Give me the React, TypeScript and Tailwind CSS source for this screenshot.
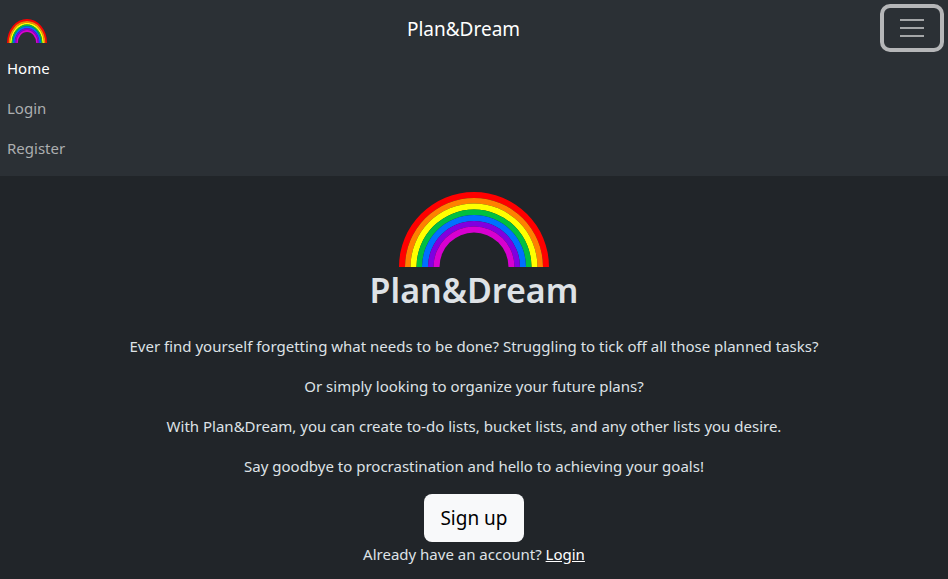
import React from "react";

const BANDS = [
  { r: 75, color: "#ff0000" },
  { r: 69, color: "#ff8000" },
  { r: 63.5, color: "#ffff00" },
  { r: 57.5, color: "#00c040" },
  { r: 52, color: "#0070ff" },
  { r: 46, color: "#8000e0" },
  { r: 40.5, color: "#d800d0" },
];

function Rainbow({ className }: { className: string }) {
  return (
    <svg viewBox="0 0 150 75" preserveAspectRatio="none" className={className} role="img" aria-label="Rainbow">
      {BANDS.map(({ r, color }, i) => {
        const inner = i < BANDS.length - 1 ? BANDS[i + 1].r : 34.5;
        return (
          <path
            key={color}
            fill={color}
            d={`M${75 - r} 75A${r} ${r} 0 0 1 ${75 + r} 75H${75 + inner}A${inner} ${inner} 0 0 0 ${75 - inner} 75Z`}
          />
        );
      })}
    </svg>
  );
}

const LINKS = ["Home", "Login", "Register"];

const LINES = [
  "Ever find yourself forgetting what needs to be done? Struggling to tick off all those planned tasks?",
  "Or simply looking to organize your future plans?",
  "With Plan&Dream, you can create to-do lists, bucket lists, and any other lists you desire.",
  "Say goodbye to procrastination and hello to achieving your goals!",
];

export default function App() {
  return (
    <div className="min-h-screen bg-[#212529] font-['Noto_Sans',sans-serif] text-[15px] leading-6 text-[#dee2e6]">
      <nav className="bg-[#2b3035] p-1">
        <div className="flex items-center justify-between">
          <a href="#home" className="pt-1.5 pl-[3px]">
            <Rainbow className="h-6 w-10" />
          </a>
          <a href="#home" className="pt-0.5 text-[19px] leading-[30px] text-white">
            Plan&amp;Dream
          </a>
          <button
            type="button"
            aria-label="Toggle navigation"
            className="flex h-12 w-16 flex-col items-center justify-center gap-1.5 rounded-[10px] border-4 border-[#b5b6b8]"
          >
            <span className="h-0.5 w-6 bg-[#a4a6a8]" />
            <span className="h-0.5 w-6 bg-[#a4a6a8]" />
            <span className="h-0.5 w-6 bg-[#a4a6a8]" />
          </button>
        </div>
        <ul className="pl-[3px]">
          {LINKS.map((link) => (
            <li key={link} className={link === "Home" ? "text-white" : "text-[#acaeb0]"}>
              <a href={`#${link.toLowerCase()}`} className="block pt-1 pb-3">
                {link}
              </a>
            </li>
          ))}
        </ul>
      </nav>
      <main className="flex flex-col items-center pt-4 text-center">
        <Rainbow className="h-[75px] w-[150px]" />
        <h1 className="mb-5 text-[34px] leading-[47px] font-semibold">Plan&amp;Dream</h1>
        {LINES.map((line) => (
          <p key={line} className="mb-4">
            {line}
          </p>
        ))}
        <button type="button" className="h-12 rounded-lg bg-[#f8f9fa] px-4 text-[19px] text-black">
          Sign up
        </button>
        <p>
          Already have an account?{" "}
          <a href="#login" className="text-white underline">
            Login
          </a>
        </p>
      </main>
    </div>
  );
}
